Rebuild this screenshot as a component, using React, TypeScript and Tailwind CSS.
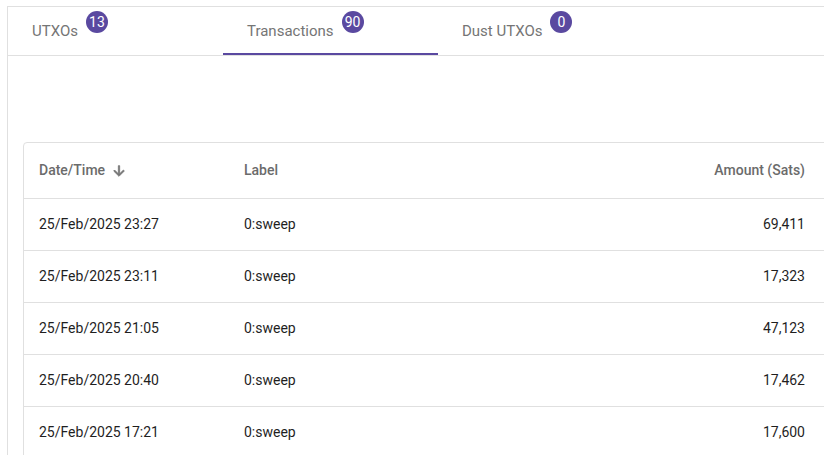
import React from "react";

type Tab = { label: string; count: number };

const TABS: Tab[] = [
  { label: "UTXOs", count: 13 },
  { label: "Transactions", count: 90 },
  { label: "Dust UTXOs", count: 0 },
];

const ROWS = [
  { date: "25/Feb/2025 23:27", label: "0:sweep", amount: "69,411" },
  { date: "25/Feb/2025 23:11", label: "0:sweep", amount: "17,323" },
  { date: "25/Feb/2025 21:05", label: "0:sweep", amount: "47,123" },
  { date: "25/Feb/2025 20:40", label: "0:sweep", amount: "17,462" },
  { date: "25/Feb/2025 17:21", label: "0:sweep", amount: "17,600" },
];

const ACTIVE_TAB = 1;

function ArrowDown() {
  return (
    <svg viewBox="0 0 24 24" className="w-[16px] h-[16px] fill-[#757575] stroke-[#757575] stroke-[1.2]">
      <path d="M20 12l-1.41-1.41L13 16.17V4h-2v12.17l-5.58-5.59L4 12l8 8 8-8z" />
    </svg>
  );
}

export default function App() {
  return (
    <div
      className="w-[824px] h-[455px] overflow-hidden bg-white pt-[6px] pl-[7px]"
      style={{ fontFamily: "Roboto, 'Liberation Sans', sans-serif" }}
    >
      <div className="w-[900px] h-[600px] border-l border-t border-[#e0e0e0]">
        {/* tabs */}
        <div className="flex h-[49px] border-b border-[#e0e0e0]">
          {TABS.map((t, i) => (
            <div key={t.label} className="relative w-[215px] h-[48px] pl-6">
              <div className="flex items-start">
                <span className="mt-[14px] text-[15px] leading-[20px] text-[#757575]">{t.label}</span>
                <span className="ml-2 mt-[4px] w-[22px] h-[22px] rounded-full bg-[#5a49a0] text-white text-[14px] leading-[22px] text-center">
                  {t.count}
                </span>
              </div>
              {i === ACTIVE_TAB && <div className="absolute left-0 right-0 bottom-0 h-[2px] bg-[#5a49a0]" />}
            </div>
          ))}
        </div>

        {/* table */}
        <div className="pt-[86px] pl-[15px]">
          <div className="w-[815px] border border-[#e0e0e0] rounded-[4px] text-[14px]">
            <div className="flex items-center h-[56px] border-b border-[#e0e0e0] font-medium text-[#6b6b6b]">
              <div className="w-[205px] pl-[15px] flex items-center gap-[6px]">
                <span>Date/Time</span>
                <ArrowDown />
              </div>
              <div className="w-[200px] pl-[15px]">Label</div>
              <div className="flex-1 text-right pr-[32px]">Amount (Sats)</div>
            </div>
            {ROWS.map(r => (
              <div key={r.date} className="flex items-center h-[52px] border-b border-[#e0e0e0] text-[#1f1f1f]">
                <div className="w-[205px] pl-[15px]">{r.date}</div>
                <div className="w-[200px] pl-[15px]">{r.label}</div>
                <div className="flex-1 text-right pr-[32px]">{r.amount}</div>
              </div>
            ))}
          </div>
        </div>
      </div>
    </div>
  );
}
